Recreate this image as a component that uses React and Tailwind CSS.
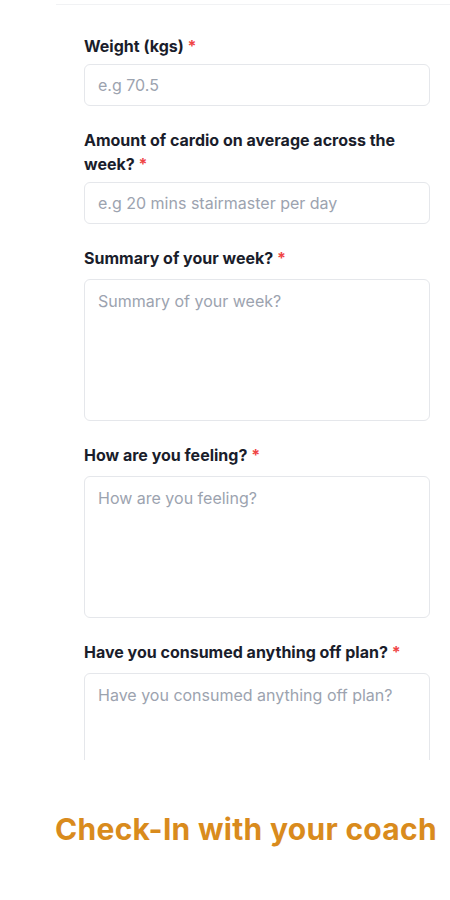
import React from "react";

function Label({ children }) {
  return (
    <div className="text-[16px] leading-[24px] font-bold text-[#1a1d2b]">
      {children}
      <span className="text-[#ef4444]">{"\u00a0*"}</span>
    </div>
  );
}

function Input({ placeholder }) {
  return (
    <div className="mt-[6px] h-[42px] rounded-[6px] border border-[#e5e7eb] flex items-center px-[13px] text-[16px] text-[#9ca3af]">
      {placeholder}
    </div>
  );
}

function Area({ placeholder }) {
  return (
    <div className="mt-[9px] h-[142px] rounded-[6px] border border-[#e5e7eb] px-[13px] pt-[10px] text-[16px] leading-[22px] text-[#9ca3af]">
      {placeholder}
    </div>
  );
}

export default function App() {
  return (
    <div
      className="w-[450px] h-[900px] bg-white overflow-hidden"
      style={{ fontFamily: "Inter, 'Liberation Sans', sans-serif" }}
    >
      <div className="h-[760px] overflow-hidden pt-[4px] pl-[56px]">
        <div className="border-t border-[#f1f2f4] pl-[28px] pr-[20px] pt-[29px]">
          <Label>Weight (kgs)</Label>
          <Input placeholder="e.g 70.5" />

          <div className="mt-[22px]">
            <div className="text-[16px] leading-[24px] font-bold text-[#1a1d2b] whitespace-nowrap">
              Amount of cardio on average across the
            </div>
            <Label>week?</Label>
          </div>
          <Input placeholder="e.g 20 mins stairmaster per day" />

          <div className="mt-[22px]">
            <Label>Summary of your week?</Label>
          </div>
          <Area placeholder="Summary of your week?" />

          <div className="mt-[22px]">
            <Label>How are you feeling?</Label>
          </div>
          <Area placeholder="How are you feeling?" />

          <div className="mt-[22px]">
            <Label>Have you consumed anything off plan?</Label>
          </div>
          <Area placeholder="Have you consumed anything off plan?" />
        </div>
      </div>
      <div className="mt-[50px] pl-[55px] text-[30px] leading-[38px] font-bold tracking-[0.3px] text-[#d98b1d]">
        Check-In with your coach
      </div>
    </div>
  );
}
